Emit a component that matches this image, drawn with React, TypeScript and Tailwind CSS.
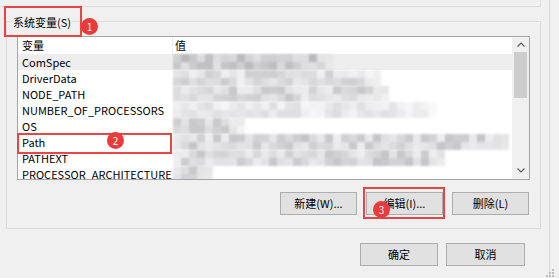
import type { ReactNode } from "react";

const FONT = { fontFamily: '"Noto Sans CJK SC", "Noto Sans", sans-serif' };

type Row = { name: string; cells: number; lo: number; hi: number; selected?: boolean };

const rows: Row[] = [
    { name: "ComSpec", cells: 20, lo: 0xb8, hi: 0xe2, selected: true },
    { name: "DriverData", cells: 26, lo: 0xcc, hi: 0xf2 },
    { name: "NODE_PATH", cells: 27, lo: 0xc4, hi: 0xee },
    { name: "NUMBER_OF_PROCESSORS", cells: 33, lo: 0xdc, hi: 0xf6 },
    { name: "OS", cells: 9, lo: 0xc0, hi: 0xea },
    { name: "Path", cells: 42, lo: 0xc4, hi: 0xee },
    { name: "PATHEXT", cells: 34, lo: 0xc4, hi: 0xee },
    { name: "PROCESSOR_ARCHITECTURE", cells: 5, lo: 0xc8, hi: 0xea },
];

const rnd = (i: number) => {
    const v = Math.sin(i * 12.9898 + 78.233) * 43758.5453;
    return v - Math.floor(v);
};

// pixelated value column, like a blurred-out screenshot
const Mosaic = ({ row, seed }: { row: Row; seed: number }) => {
    const lines = [0, 1];
    return (
        <div className="flex flex-col blur-[0.8px]">
            {lines.map((l) => (
                <div key={l} className="flex h-[8px]">
                    {Array.from({ length: row.cells }).map((_, i) => {
                        const t = rnd(seed * 100 + l * 50 + i);
                        const g = Math.round(row.lo + (row.hi - row.lo) * t);
                        const fade = i >= row.cells - 2 ? 0.5 : 1;
                        return (
                            <div
                                key={i}
                                className="w-[8px] h-[8px]"
                                style={{ backgroundColor: `rgba(${g},${g},${g + 2},${fade})` }}
                            />
                        );
                    })}
                </div>
            ))}
        </div>
    );
};

const Btn = ({ children, w = "w-[77px]" }: { children: ReactNode; w?: string }) => (
    <div className={`${w} h-[23px] bg-[#e1e1e1] border border-[#adadad] flex items-center justify-center text-[11px] text-black`}>
        {children}
    </div>
);

const Badge = ({ n, className }: { n: number; className: string }) => (
    <div className={`absolute w-[17px] h-[17px] rounded-full bg-[#e83b3b] text-white text-[10px] leading-none flex items-center justify-center ${className}`}>
        {n}
    </div>
);

const Chevron = ({ down }: { down?: boolean }) => (
    <svg width="8" height="5" viewBox="0 0 8 5" className={down ? "rotate-180" : ""}>
        <path d="M0.5 4.5 L4 1 L7.5 4.5" fill="none" stroke="#606060" strokeWidth="1.2" />
    </svg>
);

export default function App() {
    return (
        <div className="relative w-[559px] h-[278px] bg-[#f0f0f0] overflow-hidden flex" style={FONT}>
            <div className="w-[550px] h-full border-r border-[#dadada] flex flex-col">
                {/* bottom of the user variables group above */}
                <div className="h-[7px] w-[541px] border-b border-r border-[#dcdcdc]" />

                <div className="relative mt-[14px] ml-[6px] w-[535px] h-[208px] border border-[#dcdcdc]">
                    <div className="absolute left-[5px] -top-[8px] px-[1px] bg-[#f0f0f0] text-[11px] leading-[16px] text-black">
                        系统变量(S)
                    </div>

                    <div className="mt-[14px] ml-[10px] w-[513px] h-[144px] border border-[#a5a5a5] bg-white flex">
                        <div className="flex-1 overflow-hidden text-[11px] text-black">
                            <div className="h-[17px] flex items-center">
                                <div className="w-[154px] pl-[4px] leading-[17px]">变量</div>
                                <div className="h-full border-l border-[#eeeeee] pl-[2px] leading-[17px]">值</div>
                            </div>
                            {rows.map((r, idx) => (
                                <div key={r.name} className={`h-[16px] flex items-center ${r.selected ? "bg-[#eeeeee]" : ""}`}>
                                    <div className="w-[155px] pl-[4px] leading-[16px] whitespace-nowrap">{r.name}</div>
                                    <Mosaic row={r} seed={idx + 1} />
                                </div>
                            ))}
                        </div>
                        <div className="w-[17px] bg-[#f0f0f0] flex flex-col">
                            <div className="h-[15px] flex items-center justify-center">
                                <Chevron />
                            </div>
                            <div className="mx-[2px] h-[46px] bg-[#cdcdcd]" />
                            <div className="flex-1" />
                            <div className="h-[17px] flex items-center justify-center">
                                <Chevron down />
                            </div>
                        </div>
                    </div>

                    <div className="mt-[12px] pr-[11px] flex justify-end gap-[9px]">
                        <Btn>新建(W)...</Btn>
                        <Btn>编辑(I)...</Btn>
                        <Btn>删除(L)</Btn>
                    </div>
                </div>

                <div className="mt-[14px] pr-[24px] flex justify-end gap-[8px]">
                    <Btn w="w-[78px]">确定</Btn>
                    <Btn w="w-[79px]">取消</Btn>
                </div>
            </div>

            {/* annotations */}
            <div className="absolute left-[4px] top-[6px] w-[78px] h-[31px] border-2 border-[#e84545]" />
            <Badge n={1} className="left-[81px] top-[18px]" />
            <div className="absolute left-[17px] top-[133px] w-[155px] h-[21px] border-2 border-[#e84545]" />
            <Badge n={2} className="left-[107px] top-[132px]" />
            <div className="absolute left-[363px] top-[187px] w-[82px] h-[32px] border-2 border-[#e84545]" />
            <Badge n={3} className="left-[373px] top-[201px]" />

            {/* size grip */}
            <svg className="absolute left-[545px] top-[268px]" width="10" height="10" viewBox="0 0 10 10">
                <rect x="7" y="1" width="2" height="2" fill="#bcbcbc" />
                <rect x="4" y="4" width="2" height="2" fill="#bcbcbc" />
                <rect x="7" y="4" width="2" height="2" fill="#bcbcbc" />
                <rect x="1" y="7" width="2" height="2" fill="#bcbcbc" />
                <rect x="4" y="7" width="2" height="2" fill="#bcbcbc" />
                <rect x="7" y="7" width="2" height="2" fill="#bcbcbc" />
            </svg>
        </div>
    );
}
